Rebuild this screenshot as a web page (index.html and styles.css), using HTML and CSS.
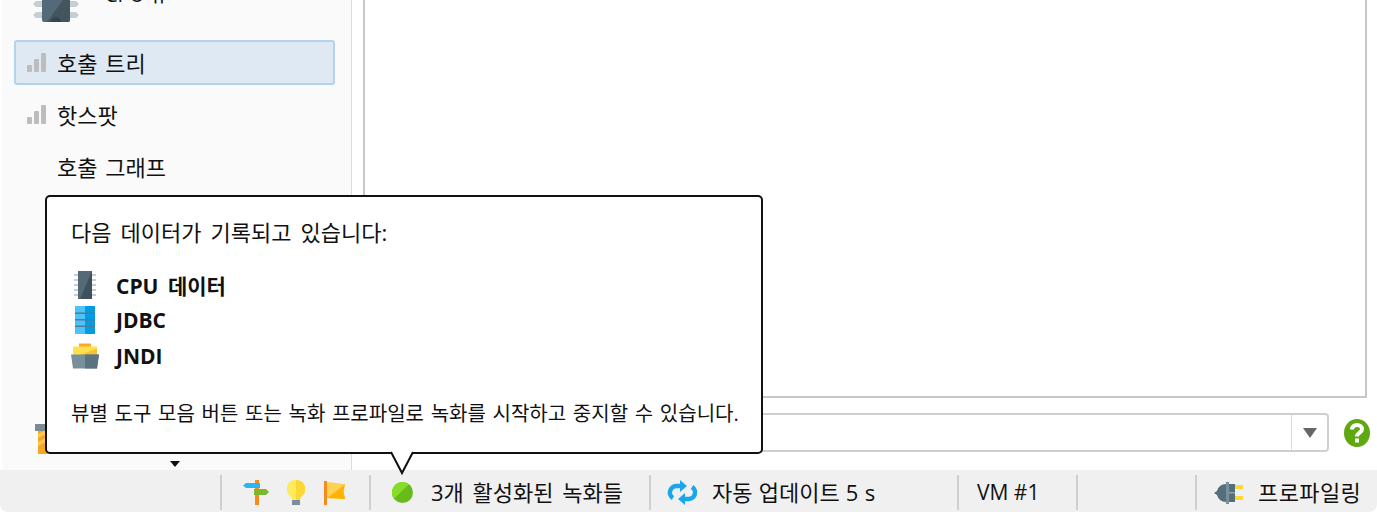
FILE: index.html
```html
<!DOCTYPE html>
<html lang="ko">

<head>
  <meta charset="UTF-8">
  <title>프로파일링</title>
  <link rel="stylesheet" href="styles.css">
</head>

<body>
  <div class="window">
    <div class="main">
      <!-- Left view selector -->
      <nav class="sidebar">
        <div class="nav-list">
          <div class="nav-section">
            <svg class="chip-big" viewBox="0 0 46 32">
              <path fill="#c5ced2" d="M3 0h40l3 3-3 3H3L0 3zM3 11h40l3 3-3 3H3l-3-3zM3 22h40l3 3-3 3H3l-3-3z"/>
              <path fill="#546a78" d="M9 0h28v30a2 2 0 0 1-2 2H11a2 2 0 0 1-2-2z"/>
              <path fill="#43565f" d="M37 0v30a2 2 0 0 1-2 2H14z"/>
              <path fill="#34454f" d="M18 32a5 5 0 0 1 10 0z"/>
            </svg>
            <span class="nav-section-label">CPU 뷰</span>
          </div>
          <div class="nav-item selected">
            <svg class="bars" viewBox="0 0 19 19"><use href="#bars"/></svg>
            <span>호출 트리</span>
          </div>
          <div class="nav-item">
            <svg class="bars" viewBox="0 0 19 19"><use href="#bars"/></svg>
            <span>핫스팟</span>
          </div>
          <div class="nav-item">
            <span class="no-icon"></span>
            <span>호출 그래프</span>
          </div>
        </div>
        <div class="nav-bottom">
          <svg class="section-icon" viewBox="0 0 24 30">
            <path fill="#f5a623" d="M3 6h18v24H3z"/>
            <path fill="#ffc94d" d="M3 10l8-4v4l-8 4zM3 18l8-4v4l-8 4z"/>
            <path fill="#7b8a93" d="M0 0h24v7H0z"/>
          </svg>
          <div class="more-arrow"></div>
        </div>
      </nav>

      <div class="content">
        <div class="panel"></div>
        <div class="filter-row">
          <div class="combo">
            <div class="combo-button"><div class="combo-arrow"></div></div>
          </div>
          <svg class="help" viewBox="0 0 26 28">
            <ellipse cx="13" cy="14" rx="13" ry="14" fill="#5fa80f"/>
            <path fill="none" stroke="#fff" stroke-width="4" d="M8 10.5c0-3 2.300-4.500 5-4.500s5 1.500 5 4.200c0 3.500-5 3.500-5 7.300"/>
            <rect x="11" y="19.500" width="4" height="4" fill="#fff"/>
          </svg>
        </div>
      </div>
    </div>

    <!-- Status bar -->
    <footer class="statusbar">
      <div class="cell cell-spacer"></div>
      <div class="cell cell-tools">
        <svg class="icon-post" viewBox="0 0 26 25">
          <rect x="12" y="0" width="4" height="25" fill="#f58a1f"/>
          <path fill="#29b6f6" d="M3 3h14v5H3L0 5.500z"/>
          <path fill="#7cb82f" d="M11 9h12l3 3-3 3H11z"/>
        </svg>
        <svg class="icon-bulb" viewBox="0 0 18 25">
          <path fill="#ffe95c" d="M9 0a9 9 0 0 0-6 16c1 1 2 3 2 4h4z"/>
          <path fill="#fdd835" d="M9 0a9 9 0 0 1 6 16c-1 1-2 3-2 4H9z"/>
          <rect x="5" y="20" width="8" height="5" fill="#78909c"/>
        </svg>
        <svg class="icon-flag" viewBox="0 0 21 24">
          <rect x="0" y="0" width="3" height="24" fill="#f58a1f"/>
          <path fill="#ffd054" d="M3 1l18 2-1.500 7 1.500 8-18-1z"/>
          <path fill="#ffb300" d="M3 17L19 5l2-2-1.500 7 1.500 8z"/>
        </svg>
      </div>
      <div class="cell cell-rec">
        <svg class="rec-dot" viewBox="0 0 22 22">
          <circle cx="11" cy="11" r="11" fill="#68bb1b"/>
          <path fill="#86dc27" d="M11 0a11 11 0 0 0-9 17.500L17.500 2.500A11 11 0 0 0 11 0z"/>
        </svg>
        <span>3개 활성화된 녹화들</span>
      </div>
      <div class="cell cell-update">
        <svg class="icon-sync" viewBox="0 0 31 25">
          <path fill="none" stroke="#1ba6ec" stroke-width="4.500" d="M15 6h-5a6.500 6.500 0 0 0-4 12M16 19h5a6.500 6.500 0 0 0 4-12"/>
          <path fill="#1ba6ec" d="M13 0l7 6-7 6zM18 13l-7 6 7 6z"/>
        </svg>
        <span>자동 업데이트 5 s</span>
      </div>
      <div class="cell cell-vm"><span>VM #1</span></div>
      <div class="cell cell-empty"></div>
      <div class="cell cell-profile">
        <svg class="plug" viewBox="0 0 29 22">
          <path fill="#fdd835" d="M19 3h10v4H19zM19 14h10v4H19z"/>
          <path fill="#546e7a" d="M0 11l3-2q2-7 9-7h9v18h-9q-7 0-9-7z"/>
          <rect x="12" y="0" width="3" height="22" fill="#78909c"/>
          <rect x="15" y="10" width="6" height="1.500" fill="#90a4ae"/>
        </svg>
        <span>프로파일링</span>
      </div>
    </footer>

    <!-- Recording balloon, lies over the sidebar and content -->
    <div class="balloon">
      <p class="balloon-title">다음 데이터가 기록되고 있습니다:</p>
      <ul class="rec-list">
        <li>
          <svg class="rec-icon" viewBox="0 0 26 28">
            <path fill="#c5ced2" d="M2 3h22v2H2zM2 8h22v2H2zM2 13h22v2H2zM2 18h22v2H2zM2 23h22v2H2z"/>
            <path fill="#546a78" d="M6 0h14v28H6z"/>
            <path fill="#3f515e" d="M20 0v28H8z"/>
          </svg>
          <span>CPU 데이터</span>
        </li>
        <li>
          <svg class="rec-icon" viewBox="0 0 26 28">
            <path fill="#4fc3f7" d="M3 0h10v28H3z"/>
            <path fill="#039be5" d="M13 0h10v28H13z"/>
            <path fill="#4a7d9a" d="M3 6.500h20V8H3zM3 13h20v1.500H3zM3 19.500h20V21H3z"/>
          </svg>
          <span>JDBC</span>
        </li>
        <li>
          <svg class="rec-icon" viewBox="0 0 28 25">
            <path fill="#ffa726" d="M8 0h12v4H8z"/>
            <path fill="#ffe04f" d="M2 3h24v9H2z"/>
            <path fill="#fbc02d" d="M7 12L26 5v7z"/>
            <path fill="#78909c" d="M0 11h28l-2 14H2z"/>
            <path fill="#5b7380" d="M14 11h14l-2 14H14z"/>
          </svg>
          <span>JNDI</span>
        </li>
      </ul>
      <p class="balloon-note">뷰별 도구 모음 버튼 또는 녹화 프로파일로 녹화를 시작하고 중지할 수 있습니다.</p>
      <svg class="balloon-tail" viewBox="0 0 26 24">
        <path fill="#fff" stroke="#111" stroke-width="2" d="M2 0l11 21L24 0"/>
      </svg>
    </div>
  </div>

  <svg class="defs" width="0" height="0">
    <symbol id="bars" viewBox="0 0 19 19">
      <rect x="0" y="12" width="5" height="7" rx="1" fill="#bdbdbd"/>
      <rect x="7" y="6" width="5" height="13" rx="1" fill="#bdbdbd"/>
      <rect x="14" y="0" width="5" height="19" rx="1" fill="#bdbdbd"/>
    </symbol>
  </svg>
</body>

</html>
```

FILE: styles.css
```css
* {
  box-sizing: border-box;
}

html,
body {
  margin: 0;
  height: 100%;
  overflow: hidden;
  background: #fff;
}

body {
  font-family: "Open Sans", "Noto Sans CJK KR", sans-serif;
  font-size: 20px;
  color: #111;
}

.window {
  position: relative;
  display: flex;
  flex-direction: column;
  height: 512px;
}

.main {
  flex: 1;
  display: flex;
  min-height: 0;
}

/* sidebar */
.sidebar {
  width: 350px;
  margin-left: 2px;
  border-right: 1px solid #dcdcdc;
  background: #fafafa;
  display: flex;
  flex-direction: column;
  justify-content: space-between;
  overflow: hidden;
}

.nav-list {
  padding: 0 16px 0 12px;
}

.nav-section {
  display: flex;
  align-items: flex-end;
  height: 41px;
  margin-top: -1px;
  padding: 0 0 0 19px;
  font-size: 20px;
}

.chip-big {
  width: 46px;
  height: 32px;
  margin-bottom: 18px;
  flex: none;
}

.nav-section-label {
  margin: 0 0 33px 26px;
  line-height: 24px;
  white-space: nowrap;
}

.nav-item {
  display: flex;
  align-items: center;
  height: 45px;
  margin-bottom: 7px;
  padding-left: 11px;
  border: 2px solid transparent;
  border-radius: 3px;
  font-size: 22px;
  word-spacing: 2px;
  line-height: 28px;
  white-space: nowrap;
}

.nav-item.selected {
  background: #dfe9f3;
  border-color: #b4d2ea;
}

.bars,
.no-icon {
  width: 19px;
  height: 19px;
  margin-right: 11px;
  flex: none;
}

.nav-bottom {
  position: relative;
  height: 48px;
}

.section-icon {
  position: absolute;
  left: 33px;
  top: 2px;
  width: 24px;
  height: 30px;
}

.more-arrow {
  position: absolute;
  left: 168px;
  top: 39px;
  border: 5px solid transparent;
  border-top: 6px solid #111;
  border-bottom: 0;
}

/* right side */
.content {
  flex: 1;
  display: flex;
  flex-direction: column;
  padding: 0 10px 18px 11px;
  min-width: 0;
}

.panel {
  flex: 1;
  border: 2px solid #c8c8c8;
  border-top: 0;
  background: #fff;
}

.filter-row {
  display: flex;
  align-items: center;
  margin-top: 15px;
}

.combo {
  flex: 1;
  height: 39px;
  border: 2px solid #cfcfcf;
  border-radius: 4px;
  display: flex;
  justify-content: flex-end;
}

.combo-button {
  width: 36px;
  border-left: 1px solid #dcdcdc;
  display: flex;
  align-items: center;
  justify-content: center;
}

.combo-arrow {
  border: 7px solid transparent;
  border-top: 10px solid #666;
  border-bottom: 0;
}

.help {
  width: 26px;
  height: 28px;
  margin: 0 -3px 0 15px;
  flex: none;
}

/* status bar */
.statusbar {
  display: flex;
  align-items: stretch;
  height: 42px;
  padding: 5px 0 2px;
  background: #f0f0f0;
  border-bottom-left-radius: 8px;
  border-bottom-right-radius: 8px;
  font-size: 22px;
  line-height: 26px;
  white-space: nowrap;
}

.cell {
  display: flex;
  align-items: center;
  border-left: 2px solid #cfcfcf;
}

.cell span {
  margin-bottom: 2px;
}

.cell-spacer {
  width: 220px;
  border-left: 0;
}

.cell-tools {
  width: 149px;
  padding-left: 21px;
}

.icon-post {
  width: 26px;
  height: 25px;
  margin-right: 18px;
}

.icon-bulb {
  width: 18px;
  height: 25px;
  margin-right: 19px;
}

.icon-flag {
  width: 21px;
  height: 24px;
}

.cell-rec {
  width: 280px;
  padding-left: 21px;
  word-spacing: 3px;
}

.rec-dot {
  width: 21px;
  height: 21px;
  margin-right: 18px;
}

.cell-update {
  width: 308px;
  padding-left: 16px;
  word-spacing: 0.5px;
}

.icon-sync {
  width: 31px;
  height: 25px;
  margin-right: 14px;
}

.cell-vm {
  width: 119px;
  padding-left: 18px;
  font-size: 21px;
}

.cell-empty {
  width: 119px;
}

.cell-profile {
  flex: 1;
  padding-left: 17px;
  letter-spacing: 0.4px;
}

.plug {
  width: 29px;
  height: 22px;
  margin-right: 15px;
}

/* balloon */
.balloon {
  position: absolute;
  left: 45px;
  top: 195px;
  width: 718px;
  height: 259px;
  padding: 22px 24px 0;
  background: #fff;
  border: 2px solid #111;
  border-radius: 5px;
}

.balloon-title,
.balloon-note {
  margin: 0;
  line-height: 26px;
  white-space: nowrap;
}

.balloon-title {
  font-size: 22px;
  word-spacing: 3.3px;
}

.balloon-note {
  margin-top: 27px;
  word-spacing: 1.5px;
}

.rec-list {
  list-style: none;
  margin: 22px 0 0;
  padding: 0;
}

.rec-list li {
  display: flex;
  align-items: center;
  height: 35.5px;
  font-weight: 700;
  font-size: 21px;
  word-spacing: 4px;
}

.rec-icon {
  width: 28px;
  height: 28px;
  margin-right: 17px;
  flex: none;
}

.balloon-tail {
  position: absolute;
  left: 342px;
  top: 255px;
  width: 26px;
  height: 24px;
  overflow: visible;
}

.defs {
  position: absolute;
}
```
